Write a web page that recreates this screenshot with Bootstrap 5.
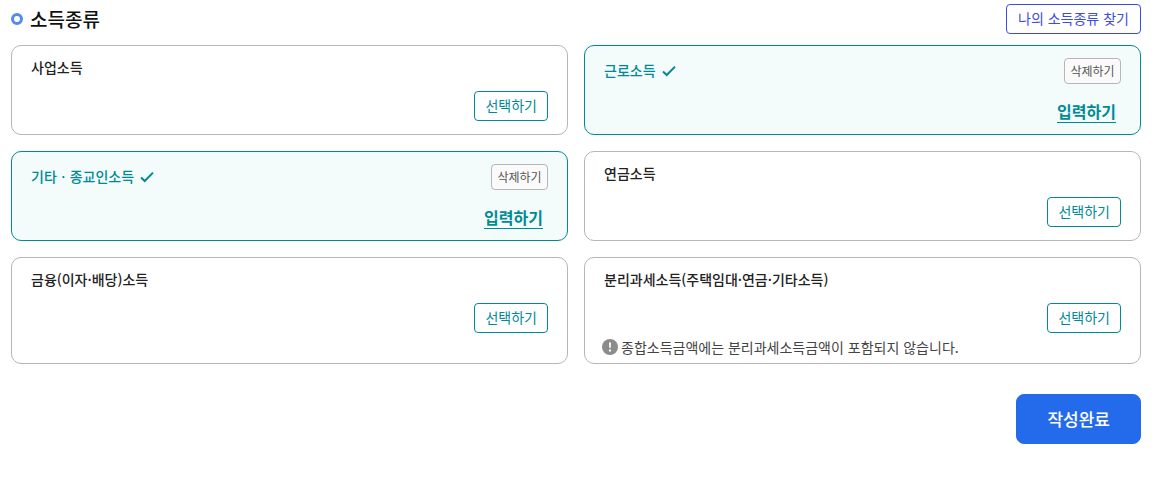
<!DOCTYPE html>
<html lang="ko">
<head>
<meta charset="utf-8">
<meta name="viewport" content="width=device-width, initial-scale=1">
<title>소득종류</title>
<link href="https://cdn.jsdelivr.net/npm/bootstrap@5.3.0/dist/css/bootstrap.min.css" rel="stylesheet">
<style>
  :root { --teal: #008a96; --line: #b6b6b6; }
  body { font-family: "Noto Sans CJK KR", "Noto Sans", sans-serif; font-size: 14px; line-height: 20px; color: #222; }
  .page { padding: 4px 17px 24px 11px; }
  .page-head { margin-bottom: 11px; }
  .page-title { font-size: 19px; line-height: 28px; font-weight: 500; color: #111; gap: 7px; }
  .ring { width: 12px; height: 12px; border: 3px solid #5389f0; border-radius: 50%; }
  .btn { --bs-btn-font-size: 14px; --bs-btn-line-height: 20px; --bs-btn-border-radius: 4px; --bs-btn-padding-x: 10px; padding-top: 3px; padding-bottom: 5px; }
  .btn-find { --bs-btn-color: #3b4ce0; --bs-btn-border-color: #3b4ce0; min-width: 135px; }
  .btn-pick { --bs-btn-color: var(--teal); --bs-btn-border-color: var(--teal); --bs-btn-bg: #fff; }
  .btn-remove { --bs-btn-font-size: 12px; --bs-btn-line-height: 18px; --bs-btn-padding-x: 5px; --bs-btn-color: #555; --bs-btn-border-color: var(--line); --bs-btn-bg: #fafafa; padding-bottom: 3px; min-width: 57px; }
  .btn-done { --bs-btn-font-size: 17px; --bs-btn-line-height: 24px; --bs-btn-font-weight: 500; --bs-btn-padding-x: 30px; --bs-btn-border-radius: 8px; --bs-btn-color: #fff; --bs-btn-bg: #246beb; --bs-btn-border-color: #246beb; padding-top: 12px; padding-bottom: 12px; margin-top: 30px; }
  .income { --bs-card-border-color: var(--line); --bs-card-border-radius: 10px; --bs-card-inner-border-radius: 9px; }
  .income .card-body { padding: 12px 19px 13px; }
  .income h3 { font-size: 14px; line-height: 19px; font-weight: 500; gap: 6px; }
  .pick-row { margin-top: 14px; }
  .income.chosen { --bs-card-border-color: var(--teal); --bs-card-bg: #f3fcfb; }
  .income.chosen .card-body { padding-bottom: 11px; }
  .chosen h3 { color: var(--teal); padding-bottom: 2px; }
  .chosen h3 svg { margin-top: 2px; }
  .enter { font-size: 16px; line-height: 22px; font-weight: 700; color: var(--teal); text-decoration: none; border-bottom: 1px solid var(--teal); margin-right: 5px; }
  .note { color: #444; gap: 3px; margin: 4px 0 -7px -2px; }
</style>
</head>
<body>
<main class="page">
  <header class="page-head d-flex justify-content-between align-items-center">
    <h2 class="page-title d-flex align-items-center mb-0"><span class="ring"></span>소득종류</h2>
    <button type="button" class="btn btn-find">나의 소득종류 찾기</button>
  </header>

  <div class="row g-3">
    <div class="col-6">
      <section class="card income h-100"><div class="card-body">
        <h3 class="mb-0">사업소득</h3>
        <div class="pick-row d-flex justify-content-end"><button type="button" class="btn btn-pick">선택하기</button></div>
      </div></section>
    </div>
    <div class="col-6">
      <section class="card income chosen h-100"><div class="card-body d-flex flex-column justify-content-between">
        <div class="d-flex justify-content-between align-items-center">
          <h3 class="d-flex align-items-center mb-0">근로소득
            <svg width="14" height="12" viewBox="0 0 14 12" fill="none" stroke="currentColor" stroke-width="2" aria-hidden="true"><path d="M1 6.5 4.7 10 13 1.6"/></svg></h3>
          <button type="button" class="btn btn-remove">삭제하기</button>
        </div>
        <div class="d-flex justify-content-end"><a class="enter" href="#">입력하기</a></div>
      </div></section>
    </div>
    <div class="col-6">
      <section class="card income chosen h-100"><div class="card-body d-flex flex-column justify-content-between">
        <div class="d-flex justify-content-between align-items-center">
          <h3 class="d-flex align-items-center mb-0">기타ㆍ종교인소득
            <svg width="14" height="12" viewBox="0 0 14 12" fill="none" stroke="currentColor" stroke-width="2" aria-hidden="true"><path d="M1 6.5 4.7 10 13 1.6"/></svg></h3>
          <button type="button" class="btn btn-remove">삭제하기</button>
        </div>
        <div class="d-flex justify-content-end"><a class="enter" href="#">입력하기</a></div>
      </div></section>
    </div>
    <div class="col-6">
      <section class="card income h-100"><div class="card-body">
        <h3 class="mb-0">연금소득</h3>
        <div class="pick-row d-flex justify-content-end"><button type="button" class="btn btn-pick">선택하기</button></div>
      </div></section>
    </div>
    <div class="col-6">
      <section class="card income h-100"><div class="card-body">
        <h3 class="mb-0">금융(이자·배당)소득</h3>
        <div class="pick-row d-flex justify-content-end"><button type="button" class="btn btn-pick">선택하기</button></div>
      </div></section>
    </div>
    <div class="col-6">
      <section class="card income h-100"><div class="card-body">
        <h3 class="mb-0">분리과세소득(주택임대·연금·기타소득)</h3>
        <div class="pick-row d-flex justify-content-end"><button type="button" class="btn btn-pick">선택하기</button></div>
        <p class="note d-flex align-items-center">
          <svg width="16" height="16" viewBox="0 0 16 16" aria-hidden="true"><circle cx="8" cy="8" r="8" fill="#8c8c8c"/><path d="M7 3.5h2l-.3 5.5H7.3zM7 10.5h2v2H7z" fill="#fff"/></svg>
          종합소득금액에는 분리과세소득금액이 포함되지 않습니다.</p>
      </div></section>
    </div>
  </div>

  <div class="d-flex justify-content-end"><button type="button" class="btn btn-done">작성완료</button></div>
</main>
</body>
</html>
